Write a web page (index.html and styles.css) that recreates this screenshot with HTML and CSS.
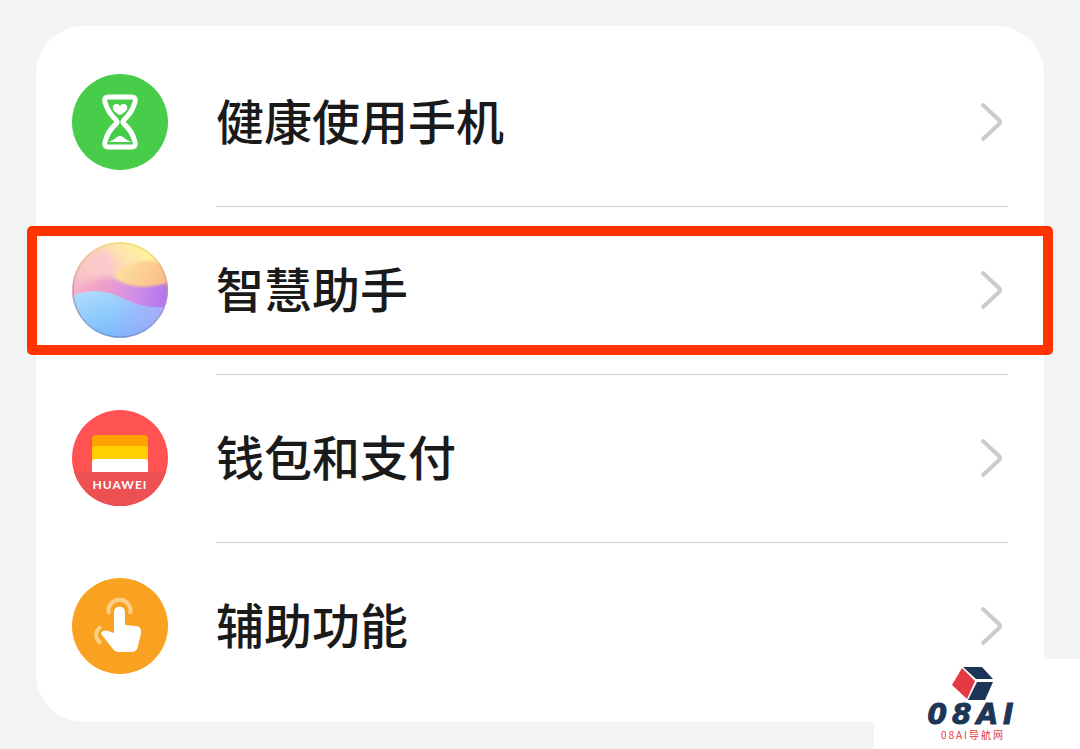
FILE: index.html
```html
<!DOCTYPE html>
<html lang="zh-CN">

<head>
    <meta charset="UTF-8">
    <meta name="viewport" content="width=device-width, initial-scale=1.0">
    <title>设置</title>
    <link rel="stylesheet" href="styles.css">
</head>

<body>
    <main class="card">
        <ul class="list">
            <li class="item">
                <a class="link" href="#health">
                    <svg class="icon" viewBox="0 0 96 96" aria-hidden="true">
                        <circle cx="48" cy="48" r="48" fill="#48cd4b" />
                        <path d="M36 23h24c3 0 4 2 3 5c-2 8-5 12-11 18q-2 2 0 4c6 5 9 10 11 18c1 3 0 5-3 5H36c-3 0-4-2-3-5c2-8 5-13 11-18q2-2 0-4c-6-6-9-10-11-18c-1-3 0-5 3-5z" fill="none" stroke="#fff" stroke-width="5" stroke-linejoin="round" />
                        <path d="M48 41c-6-3-8-6-7-9c2-3 6-2 7 0c1-2 5-3 7 0c1 3-1 6-7 9z" fill="#fff" />
                        <path d="M37 68c3-2 5-2 8-5q3-2 6 0c3 3 5 3 8 5z" fill="#fff" />
                    </svg>
                    <span class="name">健康使用手机</span>
                    <svg class="arrow" viewBox="0 0 24 40" aria-hidden="true"><path d="M3 3l16 15q2 2 0 4L3 37" /></svg>
                </a>
            </li>
            <li class="item active">
                <a class="link" href="#assistant">
                    <svg class="icon" viewBox="0 0 96 96" aria-hidden="true">
                        <defs>
                            <clipPath id="ball"><circle cx="48" cy="48" r="48" /></clipPath>
                            <linearGradient id="sky" x1="0" y1="0.6" x2="0.7" y2="0">
                                <stop offset="0" stop-color="#f4b3cb" />
                                <stop offset="0.5" stop-color="#fbcfc4" />
                                <stop offset="1" stop-color="#fff49c" />
                            </linearGradient>
                            <linearGradient id="sun" x1="0" y1="0.2" x2="1" y2="0.5">
                                <stop offset="0" stop-color="#fde3a0" />
                                <stop offset="1" stop-color="#fcb887" />
                            </linearGradient>
                            <linearGradient id="wave" gradientUnits="userSpaceOnUse" x1="0" y1="40" x2="96" y2="55">
                                <stop offset="0" stop-color="#f6b4cb" />
                                <stop offset="0.3" stop-color="#f19fc4" />
                                <stop offset="0.6" stop-color="#d592e4" />
                                <stop offset="1" stop-color="#b273ee" />
                            </linearGradient>
                            <linearGradient id="sea" x1="0.1" y1="0" x2="0.7" y2="1">
                                <stop offset="0" stop-color="#b0dcfb" />
                                <stop offset="0.5" stop-color="#8bcafd" />
                                <stop offset="1" stop-color="#76b2fb" />
                            </linearGradient>
                            <linearGradient id="tint" x1="0" y1="0" x2="1" y2="0">
                                <stop offset="0.4" stop-color="#b7a5fb" stop-opacity="0" />
                                <stop offset="1" stop-color="#b7a5fb" stop-opacity="0.8" />
                            </linearGradient>
                            <linearGradient id="rim" x1="0" y1="0" x2="0" y2="1">
                                <stop offset="0" stop-color="#ecd65c" />
                                <stop offset="0.5" stop-color="#c390a9" />
                                <stop offset="1" stop-color="#6e91bf" />
                            </linearGradient>
                            <filter id="soft" x="-30%" y="-30%" width="160%" height="160%"><feGaussianBlur stdDeviation="3" /></filter>
                            <filter id="edge"><feGaussianBlur stdDeviation="1" /></filter>
                        </defs>
                        <g clip-path="url(#ball)">
                            <rect width="96" height="96" fill="url(#sky)" />
                            <ellipse cx="30" cy="24" rx="12" ry="15" fill="#fbc9cb" filter="url(#soft)" />
                            <path d="M-10 48c20-4 36-16 52-12c18 5 45 4 64 0v40H-10z" fill="url(#wave)" filter="url(#soft)" />
                            <path d="M42 34c6-8 20-15 34-15c12 0 20 4 30 10v7c-22 12-52 12-64-2z" fill="url(#sun)" filter="url(#edge)" />
                            <path d="M0 54c14-6 29-6 43-1c18 8 31 14 53 12v31H0z" fill="url(#sea)" />
                            <path d="M0 54c14-6 29-6 43-1c18 8 31 14 53 12v31H0z" fill="url(#tint)" />
                        </g>
                        <circle cx="48" cy="48" r="47" fill="none" stroke="url(#rim)" stroke-width="1" />
                    </svg>
                    <span class="name">智慧助手</span>
                    <svg class="arrow" viewBox="0 0 24 40" aria-hidden="true"><path d="M3 3l16 15q2 2 0 4L3 37" /></svg>
                </a>
            </li>
            <li class="item">
                <a class="link" href="#wallet">
                    <svg class="icon" viewBox="0 0 96 96" aria-hidden="true">
                        <circle cx="48" cy="48" r="48" fill="#ff5252" />
                        <path d="M2 62h92a48 48 0 0 1-92 0z" fill="#ec5053" />
                        <path d="M20 40V29q0-4 4-4h48q4 0 4 4v11z" fill="#ffa200" />
                        <path d="M20 53V39q0-3 4-3h48q4 0 4 3v14z" fill="#ffcf00" />
                        <path d="M20 62V52q0-3 4-3h48q4 0 4 3v10z" fill="#fff" />
                        <text class="brand" x="48" y="79" text-anchor="middle">HUAWEI</text>
                    </svg>
                    <span class="name">钱包和支付</span>
                    <svg class="arrow" viewBox="0 0 24 40" aria-hidden="true"><path d="M3 3l16 15q2 2 0 4L3 37" /></svg>
                </a>
            </li>
            <li class="item">
                <a class="link" href="#accessibility">
                    <svg class="icon" viewBox="0 0 96 96" aria-hidden="true">
                        <circle cx="48" cy="48" r="48" fill="#f9a120" />
                        <path d="M37 36a11 11 0 1 1 21 0M29 49c-6 3-7 12 0 16" fill="none" stroke="#fdd08a" stroke-width="4" />
                        <path d="M42 34a5 5 0 0 1 11 0v13l11 1q6 1 5 7l-3 13q-1 6-7 6H46q-3 0-5-3L30 57q-2-3 1-4q2-1 5 0l6 2z" fill="#fff" />
                    </svg>
                    <span class="name">辅助功能</span>
                    <svg class="arrow" viewBox="0 0 24 40" aria-hidden="true"><path d="M3 3l16 15q2 2 0 4L3 37" /></svg>
                </a>
            </li>
        </ul>
    </main>

    <div class="watermark">
        <svg class="cube" viewBox="0 0 42 34" aria-hidden="true">
            <path d="M10 1L23 14L15 32L0 18z" fill="#e63946" />
            <path d="M11 0h19l11 12H24z" fill="#1d3557" />
            <path d="M25 15h16l-8 18H16z" fill="#1d3557" />
        </svg>
        <div class="logo">08AI</div>
        <div class="site">08AI导航网</div>
    </div>
</body>

</html>
```
FILE: styles.css
```css
* {
    box-sizing: border-box;
}

body {
    margin: 0;
    padding: 26px 36px;
    background-color: #f1f3f5;
    font-family: "Noto Sans CJK SC", sans-serif;
    color: #1a1a1a;
}

.card {
    padding: 12px 36px;
    background-color: #fff;
    border-radius: 48px;
}

.list {
    margin: 0;
    padding: 0;
    list-style: none;
}

.item {
    position: relative;
}

.link {
    display: flex;
    align-items: center;
    gap: 48px;
    height: 168px;
    color: inherit;
    text-decoration: none;
}

/* divider starts under the text, not under the icon */
.item + .item::before {
    content: "";
    position: absolute;
    top: 0;
    left: 144px;
    right: 0;
    height: 1px;
    background-color: #ccc;
}

/* red highlight frame */
.active::after {
    content: "";
    position: absolute;
    top: 20px;
    bottom: 19px;
    left: -45px;
    right: -45px;
    border: 10px solid #ff3300;
    border-radius: 5px;
    pointer-events: none;
}

.icon {
    flex: none;
    width: 96px;
    height: 96px;
}

.name {
    flex: 1;
    padding-bottom: 6px;
    font-size: 48px;
    font-weight: 500;
    line-height: 72px;
}

.arrow {
    flex: none;
    width: 24px;
    height: 40px;
    margin-right: 4px;
    fill: none;
    stroke: #ccc;
    stroke-width: 4px;
    stroke-linecap: round;
}

.brand {
    font-family: Lato, sans-serif;
    font-size: 12px;
    font-weight: 700;
    letter-spacing: 1px;
    fill: #fff;
}

.watermark {
    position: fixed;
    right: 0;
    bottom: 0;
    width: 206px;
    height: 90px;
    padding-top: 8px;
    padding-right: 8px;
    display: flex;
    flex-direction: column;
    align-items: center;
    background-color: #fff;
}

.cube {
    width: 42px;
    height: 34px;
}

.logo {
    font-family: "DejaVu Sans", sans-serif;
    font-size: 28px;
    font-weight: 700;
    font-style: italic;
    letter-spacing: 5px;
    line-height: 28px;
    color: #1d3557;
    -webkit-text-stroke: 1px #1d3557;
}

.site {
    font-size: 10px;
    letter-spacing: 2px;
    line-height: 12px;
    color: #e63946;
}
```
